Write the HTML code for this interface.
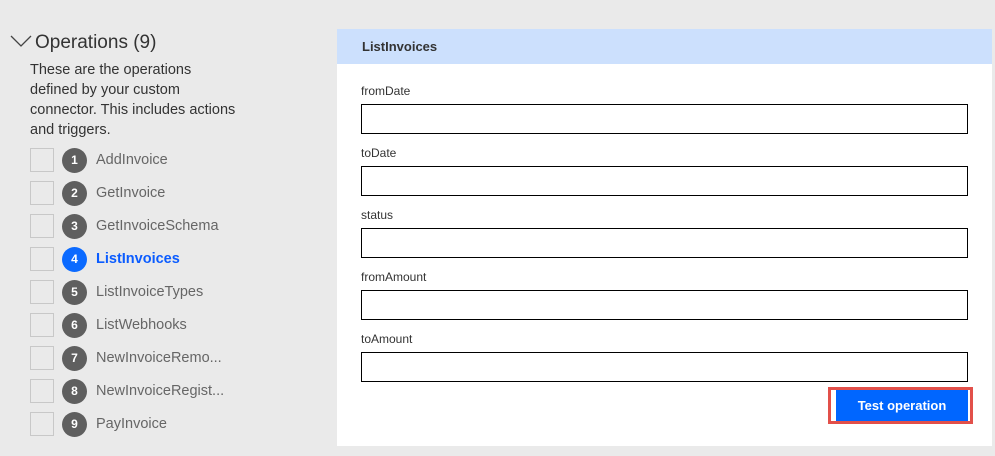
<!DOCTYPE html>
<html><head><style>
*{margin:0;padding:0;box-sizing:border-box}
body{width:995px;height:456px;background:#eaeaea;font-family:"Segoe UI","Liberation Sans",sans-serif;position:relative;overflow:hidden;color:#333}
.abs{position:absolute}
.title{left:35px;top:32px;font-size:19px;color:#333}
.desc{left:30px;top:60px;width:212px;font-size:14.5px;line-height:20px;color:#333}
.row{position:absolute;left:30px;height:24px;width:260px}
.cb{position:absolute;left:0;top:0;width:24px;height:24px;border:1px solid #c8c8c8;background:#eaeaea}
.num{position:absolute;top:0;width:25px;height:25px;border-radius:50%;background:#5f5f5f;color:#fff;font-size:12px;font-weight:bold;text-align:center;line-height:25px}
.lbl{position:absolute;left:66px;top:4px;font-size:14.5px;color:#666}
.row.act .num{background:#0b6aff}
.row.act .lbl{color:#0b5cff;font-weight:bold}
.panel{left:337px;top:29px;width:655px;height:417px;background:#fff}
.hdr{left:337px;top:29px;width:655px;height:35px;background:#cce0fd;font-size:13px;font-weight:bold;color:#333;padding:10px 0 0 25px}
.fl{position:absolute;left:361px;font-size:12px;color:#333}
.in{position:absolute;left:361px;width:607px;height:30px;border:1px solid #000;background:#fff}
.btnb{left:828px;top:387px;width:145px;height:37px;border:3px solid #e2504a;background:#fff}
.btn{left:836px;top:390px;width:132px;height:31px;background:#0066ff;color:#fff;font-size:13px;font-weight:bold;text-align:center;line-height:31px}
</style></head><body>
<svg class="abs" style="left:10px;top:34px" width="22" height="14"><path d="M1 2 L11 12 L21 2" fill="none" stroke="#444" stroke-width="1.3"/></svg>
<div class="abs title">Operations (9)</div>
<div class="abs desc">These are the operations defined by your custom connector. This includes actions and triggers.</div>
<div class="row" style="top:148px"><div class="cb"></div><div class="num" style="left:32px">1</div><div class="lbl">AddInvoice</div></div>
<div class="row" style="top:181px"><div class="cb"></div><div class="num" style="left:32px">2</div><div class="lbl">GetInvoice</div></div>
<div class="row" style="top:214px"><div class="cb"></div><div class="num" style="left:32px">3</div><div class="lbl">GetInvoiceSchema</div></div>
<div class="row act" style="top:247px"><div class="cb"></div><div class="num" style="left:32px">4</div><div class="lbl">ListInvoices</div></div>
<div class="row" style="top:280px"><div class="cb"></div><div class="num" style="left:32px">5</div><div class="lbl">ListInvoiceTypes</div></div>
<div class="row" style="top:313px"><div class="cb"></div><div class="num" style="left:32px">6</div><div class="lbl">ListWebhooks</div></div>
<div class="row" style="top:346px"><div class="cb"></div><div class="num" style="left:32px">7</div><div class="lbl">NewInvoiceRemo...</div></div>
<div class="row" style="top:379px"><div class="cb"></div><div class="num" style="left:32px">8</div><div class="lbl">NewInvoiceRegist...</div></div>
<div class="row" style="top:412px"><div class="cb"></div><div class="num" style="left:32px">9</div><div class="lbl">PayInvoice</div></div>
<div class="abs panel"></div>
<div class="abs hdr">ListInvoices</div>
<div class="fl" style="top:84px">fromDate</div><div class="in" style="top:104px"></div>
<div class="fl" style="top:146px">toDate</div><div class="in" style="top:166px"></div>
<div class="fl" style="top:208px">status</div><div class="in" style="top:228px"></div>
<div class="fl" style="top:270px">fromAmount</div><div class="in" style="top:290px"></div>
<div class="fl" style="top:332px">toAmount</div><div class="in" style="top:352px"></div>
<div class="abs btnb"></div>
<div class="abs btn">Test operation</div>
</body></html>
